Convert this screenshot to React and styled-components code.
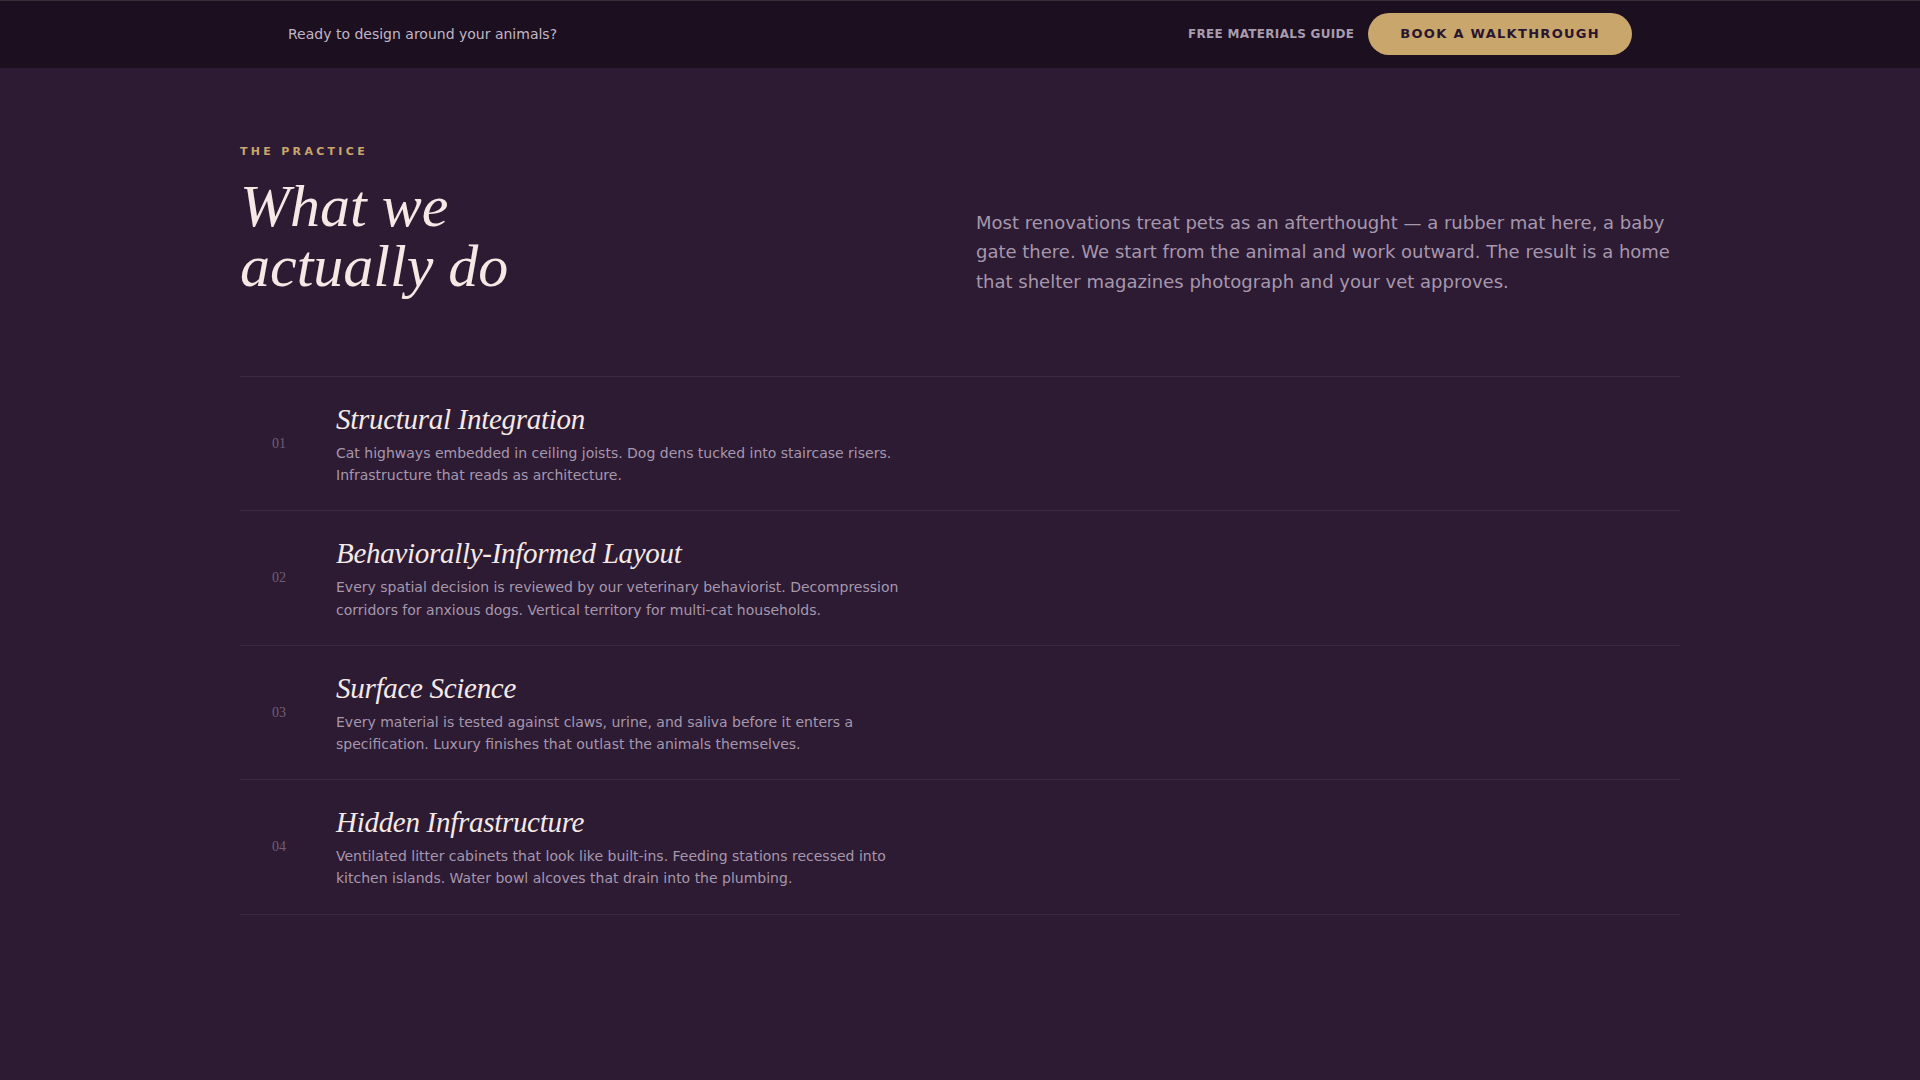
import { createGlobalStyle, styled } from 'styled-components';

const services = [
  {
    num: '01',
    title: 'Structural Integration',
    text: 'Cat highways embedded in ceiling joists. Dog dens tucked into staircase risers. Infrastructure that reads as architecture.',
  },
  {
    num: '02',
    title: 'Behaviorally-Informed Layout',
    text: 'Every spatial decision is reviewed by our veterinary behaviorist. Decompression corridors for anxious dogs. Vertical territory for multi-cat households.',
  },
  {
    num: '03',
    title: 'Surface Science',
    text: 'Every material is tested against claws, urine, and saliva before it enters a specification. Luxury finishes that outlast the animals themselves.',
  },
  {
    num: '04',
    title: 'Hidden Infrastructure',
    text: 'Ventilated litter cabinets that look like built-ins. Feeding stations recessed into kitchen islands. Water bowl alcoves that drain into the plumbing.',
  },
];

export default function App() {
  return (
    <>
      <GlobalStyle />
      <TopBar>
        <BarInner>
          <BarText>Ready to design around your animals?</BarText>
          <BarActions>
            <GuideLink href="#">Free Materials Guide</GuideLink>
            <BookButton>Book a Walkthrough</BookButton>
          </BarActions>
        </BarInner>
      </TopBar>
      <Section>
        <Container>
          <Intro>
            <div>
              <Eyebrow>The Practice</Eyebrow>
              <Heading>
                What we
                <br />
                actually do
              </Heading>
            </div>
            <Lead>
              Most renovations treat pets as an afterthought — a rubber mat here, a baby gate
              there. We start from the animal and work outward. The result is a home that
              shelter magazines photograph and your vet approves.
            </Lead>
          </Intro>
          <List>
            {services.map((item) => (
              <Row key={item.num}>
                <Num>{item.num}</Num>
                <div>
                  <RowTitle>{item.title}</RowTitle>
                  <RowText>{item.text}</RowText>
                </div>
              </Row>
            ))}
          </List>
        </Container>
      </Section>
    </>
  );
}

const GlobalStyle = createGlobalStyle`
  html, body {
    margin: 0;
    padding: 0;
    background: #2c1b33;
    font-family: "DejaVu Sans", Verdana, sans-serif;
  }
  * {
    box-sizing: border-box;
  }
`;

const TopBar = styled.header`
  background: #1b0f20;
  border-top: 1px solid #3a2c36;
  height: 68px;
  padding-bottom: 2px;
  display: flex;
  align-items: center;
`;

const BarInner = styled.div`
  width: 1440px;
  margin: 0 auto;
  padding: 0 48px;
  display: flex;
  align-items: center;
  justify-content: space-between;
`;

const BarText = styled.p`
  margin: 0;
  font-size: 14px;
  color: #c2b6c6;
`;

const BarActions = styled.div`
  display: flex;
  align-items: center;
  gap: 14px;
`;

const GuideLink = styled.a`
  font-size: 12px;
  font-weight: 700;
  letter-spacing: 0.025em;
  text-transform: uppercase;
  text-decoration: none;
  color: #a99cae;
`;

const BookButton = styled.button`
  border: none;
  border-radius: 999px;
  background: #c9a66b;
  color: #2a1530;
  font-family: inherit;
  font-size: 13px;
  font-weight: 700;
  letter-spacing: 0.1em;
  text-transform: uppercase;
  height: 42px;
  padding: 0 32px;
  cursor: pointer;
`;

const Section = styled.section`
  padding: 77px 0 168px;
`;

const Container = styled.div`
  width: 1440px;
  margin: 0 auto;
`;

const Intro = styled.div`
  display: grid;
  grid-template-columns: 1fr 1fr;
  gap: 32px;
  align-items: end;
`;

const Eyebrow = styled.div`
  font-size: 11px;
  font-weight: 700;
  letter-spacing: 0.3em;
  text-transform: uppercase;
  color: #c9a66b;
  margin-bottom: 18px;
`;

const Heading = styled.h2`
  margin: 0;
  font-family: "Liberation Serif", "Times New Roman", serif;
  font-style: italic;
  font-weight: 400;
  font-size: 60px;
  line-height: 1;
  color: #f5e9e6;
`;

const Lead = styled.p`
  margin: 0;
  font-size: 18px;
  line-height: 1.63;
  color: #a797ad;
`;

const List = styled.div`
  margin-top: 80px;
  border-top: 1px solid #3b2a42;
`;

const Row = styled.div`
  display: grid;
  grid-template-columns: 40px 1fr;
  gap: 24px;
  align-items: center;
  padding: 24px 32px;
  border-bottom: 1px solid #3b2a42;
`;

const Num = styled.span`
  font-family: "Liberation Serif", "Times New Roman", serif;
  font-size: 14px;
  color: #705e77;
`;

const RowTitle = styled.h3`
  margin: 0 0 3px;
  font-family: "Liberation Serif", "Times New Roman", serif;
  font-style: italic;
  font-weight: 400;
  font-size: 29px;
  line-height: 1.3;
  letter-spacing: -0.01em;
  color: #f5e9e6;
`;

const RowText = styled.p`
  margin: 0;
  max-width: 580px;
  font-size: 14px;
  line-height: 1.6;
  color: #a797ad;
`;
